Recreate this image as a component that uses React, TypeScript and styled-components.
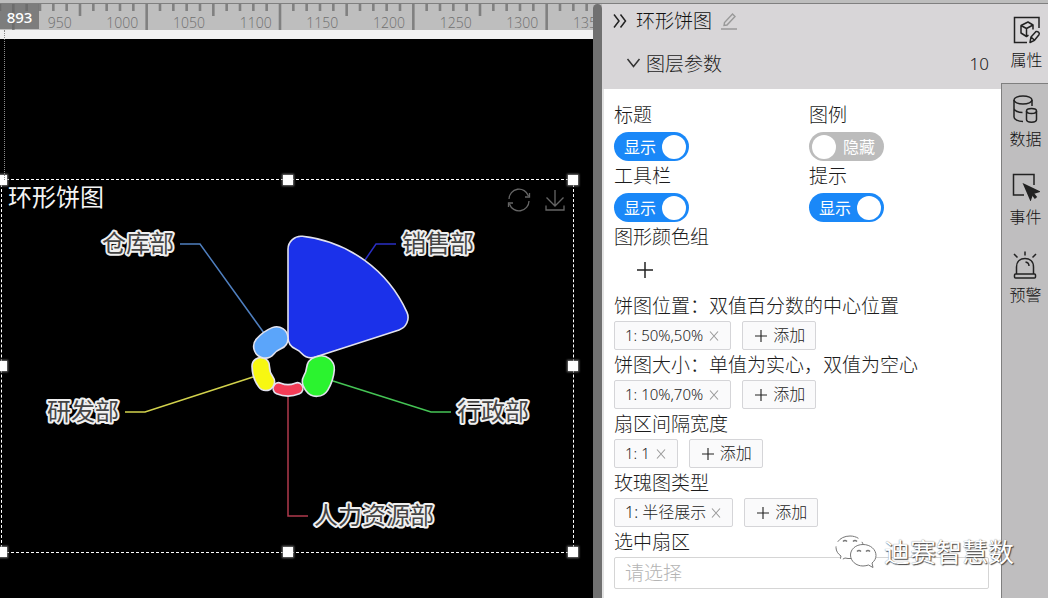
import React, { useLayoutEffect, useRef, useState } from "react";
import styled, { createGlobalStyle, css } from "styled-components";

const GlobalStyle = createGlobalStyle`
  *, *::before, *::after { box-sizing: border-box; }
  body {
    margin: 0;
    background: #bfbebf;
    color: #1c1c1c;
    font-family: "Noto Sans", "Noto Sans CJK SC", sans-serif;
    font-size: 19px;
    font-weight: 300;
    overflow: hidden;
  }
  button, select, input { font: inherit; color: inherit; }
`;

const Page = styled.div`
  display: flex;
  flex-direction: column;
  height: 100vh;
`;

const TopStrip = styled.div`
  flex: none;
  height: 4px;
  background: #bdbdbd;
  border-bottom: 1px solid #7f7f7f;
`;

const Workspace = styled.div`
  display: flex;
  flex: 1;
  min-height: 0;
`;

/* ---------- stage ---------- */

const Stage = styled.main`
  display: flex;
  flex-direction: column;
  flex: 1;
  min-width: 0;
  position: relative;
  background: #f1f1f1;
`;

const RulerBar = styled.div`
  flex: none;
  position: relative;
  height: 26px;
  margin-bottom: 9px;
  overflow: hidden;
  background: #bebebe;

  svg { display: block; }
  text {
    font-family: "Open Sans", sans-serif;
    font-size: 14px;
    font-weight: 300;
    fill: #6f6f6f;
    text-anchor: end;
  }
`;

const RulerBadge = styled.output`
  position: absolute;
  left: 0;
  top: 0;
  width: 39px;
  height: 25px;
  background: rgba(100, 100, 100, 0.72);
  color: #fff;
  font-size: 15px;
  font-weight: 500;
  line-height: 26px;
  text-align: center;
`;

const Canvas = styled.div`
  flex: 1;
  position: relative;
  overflow: hidden;
  background: #000;
`;

const GuideLine = styled.div`
  position: absolute;
  left: 4px;
  top: 26px;
  height: 150px;
  border-left: 1px dotted #8a8a8a;
  z-index: 1;
`;

const Selection = styled.section`
  position: absolute;
  left: 1px;
  top: 140px;
  width: 573px;
  height: 374px;
  border: 1px dashed #fff;
`;

const Handle = styled.span<{ $x: number; $y: number }>`
  position: absolute;
  left: ${(p) => p.$x}%;
  top: ${(p) => p.$y}%;
  width: 10px;
  height: 10px;
  margin: -5px 0 0 -5px;
  background: #fff;
  box-shadow: 0 0 2px 1px #777;
`;

const ChartHead = styled.header`
  position: absolute;
  left: 6px;
  right: 6px;
  top: 0;
  display: flex;
  justify-content: space-between;
  align-items: center;
  height: 34px;
`;

const ChartTitle = styled.h2`
  margin: 0;
  color: #f4f4f4;
  font-size: 24px;
  font-weight: 400;
  line-height: 32px;
`;

const ChartTools = styled.div`
  display: flex;
  gap: 12px;
  padding-top: 6px;
`;

const IconButton = styled.button`
  display: flex;
  align-items: center;
  justify-content: center;
  padding: 0;
  border: 0;
  background: none;
  cursor: pointer;
`;

const ChartSvg = styled.svg`
  display: block;

  text {
    font-size: 24px;
    font-weight: 400;
    fill: #444;
    stroke: #f0f0f0;
    stroke-width: 4px;
    stroke-linejoin: round;
    paint-order: stroke;
  }
`;

const Splitter = styled.div`
  flex: none;
  width: 9px;
  background: #707070;
  border-radius: 5px 5px 0 0;
`;

/* ---------- properties panel ---------- */

const Panel = styled.aside`
  flex: none;
  display: flex;
  flex-direction: column;
  width: 399px;
  background: #fff;
`;

const PanelHead = styled.header`
  flex: none;
  height: 85px;
  padding: 0 12px 0 11px;
  background: #d8d6d8;
`;

const HeadRow = styled.div`
  display: flex;
  align-items: center;
  height: 34px;
  gap: 9px;
`;

const HeadTitle = styled.h1`
  margin: 0;
  color: #111;
  font-size: 19px;
  font-weight: 300;
  line-height: 30px;
`;

const GroupRow = styled.button`
  display: flex;
  align-items: center;
  gap: 5px;
  width: 100%;
  height: 50px;
  padding: 0 0 0 13px;
  border: 0;
  background: none;
  cursor: pointer;

  output { margin-left: auto; font-size: 17px; }
`;

const PanelBody = styled.form`
  flex: 1;
  padding: 11px 12px 8px 10px;
  border-left: 2px solid #e2e2e2;
`;

const SwitchGrid = styled.div`
  display: grid;
  grid-template-columns: 52% 48%;
`;

const FieldLabel = styled.label`
  display: block;
  line-height: 30px;
  white-space: nowrap;
`;

const SwitchTrack = styled.label<{ $on: boolean }>`
  display: flex;
  align-items: center;
  justify-content: space-between;
  flex-direction: ${(p) => (p.$on ? "row" : "row-reverse")};
  width: 75px;
  height: 29px;
  margin-top: 2px;
  padding: ${(p) => (p.$on ? "0 3px 0 10px" : "0 9px 0 3px")};
  border-radius: 15px;
  background: ${(p) => (p.$on ? "#1a88f8" : "#bcbcbc")};
  color: #fff;
  font-size: 16px;
  font-weight: 400;
  line-height: 28px;
  cursor: pointer;
`;

const SwitchInput = styled.input`
  appearance: none;
  width: 24px;
  height: 24px;
  margin: 0;
  border-radius: 50%;
  background: #fff;
  cursor: pointer;
`;

const AddColor = styled(IconButton)`
  width: 62px;
  height: 36px;
  margin-bottom: 3px;
`;

const TagRow = styled.div`
  display: flex;
  gap: 11px;
  height: 29px;
`;

const chip = css`
  display: flex;
  align-items: center;
  height: 29px;
  border: 1px solid #d5d5d8;
  border-radius: 2px;
  background: #fafafb;
  line-height: 27px;
  white-space: nowrap;
`;

const Tag = styled.span<{ $numeric: boolean }>`
  ${chip}
  gap: ${(p) => (p.$numeric ? 6 : 5)}px;
  padding: 0 11px 0 10px;
  font-size: ${(p) => (p.$numeric ? 15 : 16)}px;
`;

const AddButton = styled.button`
  ${chip}
  gap: 6px;
  padding: 0 10px 0 12px;
  font-size: 16px;
  cursor: pointer;
`;

const SectorSelect = styled.select`
  display: block;
  appearance: none;
  width: 100%;
  height: 32px;
  padding: 0 10px;
  border: 1px solid #d5d5d5;
  border-radius: 2px;
  background: #fff;
  color: #b4b4b4;
  line-height: 30px;
`;

/* ---------- tab rail ---------- */

const Rail = styled.nav`
  flex: none;
  display: flex;
  flex-direction: column;
  width: 47px;
  background: #d8d6d8;
`;

const RailRest = styled.div`
  flex: 1;
  border: solid #7f7f7f;
  border-width: 1px 0 0 1px;
  background: #bfbebf;
`;

const RailTab = styled.button<{ $active?: boolean }>`
  display: flex;
  flex-direction: column;
  align-items: center;
  gap: 6px;
  width: 100%;
  height: ${(p) => (p.$active ? 79 : 78)}px;
  padding: ${(p) => (p.$active ? "12px 0 0 4px" : "11px 0 0 1px")};
  border: 0;
  background: none;
  color: #111;
  font-size: 16px;
  line-height: 20px;
  cursor: pointer;

  svg { flex: none; display: block; }
`;

const Watermark = styled.div`
  position: absolute;
  right: 34px;
  bottom: 27px;
  display: flex;
  align-items: center;
  gap: 7px;
  color: #fff;
  font-size: 26px;
  font-weight: 400;
  line-height: 38px;
  text-shadow: 1px 1px 1px #444, 0 0 1px #777;
  pointer-events: none;
`;

/* ---------- ruler ---------- */

const TICK = 40 / 3;

function Ruler() {
  const bar = useRef<HTMLDivElement>(null);
  const [width, setWidth] = useState(0);

  useLayoutEffect(() => {
    const el = bar.current;
    if (!el) return;
    const measure = () => setWidth(el.clientWidth);
    measure();
    const observer = new ResizeObserver(measure);
    observer.observe(el);
    return () => observer.disconnect();
  }, []);

  const tickCount = Math.ceil(width / TICK);
  const labelCount = Math.ceil((width + 28) / (5 * TICK));

  return (
    <RulerBar ref={bar}>
      <svg width="100%" height="26">
        <g stroke="#808080" strokeWidth="2.6">
          {Array.from({ length: tickCount }, (_, i) => (
            <line key={i} x1={i * TICK} x2={i * TICK} y1={0} y2={i % 10 === 1 ? 26 : i % 10 === 6 ? 12 : 7} />
          ))}
        </g>
        {Array.from({ length: labelCount }, (_, k) => (
          <text key={k} x={5 + k * 5 * TICK} y={24}>
            {900 + k * 50}
          </text>
        )).slice(1)}
      </svg>
      <RulerBadge>893</RulerBadge>
    </RulerBar>
  );
}

/* ---------- rose chart ---------- */

const INNER = 18.6;

const sectors = [
  { name: "销售部", radius: 130.5, fill: "#1b31ea", line: "#2a2fc4", points: "78,-106 89,-122 109,-122", x: 115, anchor: "start" },
  { name: "行政部", radius: 46.5, fill: "#2bf32f", line: "#45c455", points: "46,15 144,46 164,46", x: 170, anchor: "start" },
  { name: "人力资源部", radius: 30, fill: "#f43c57", line: "#b03a4c", points: "1,30 1,150 21,150", x: 27, anchor: "start" },
  { name: "研发部", radius: 36, fill: "#f7f712", line: "#d2d24c", points: "-34,11 -142,46 -162,46", x: -168, anchor: "end" },
  { name: "仓库部", radius: 41.5, fill: "#5ba5fa", line: "#4f7fbf", points: "-23,-33 -87,-122 -107,-122", x: -113, anchor: "end" },
] as const;

function polar(r: number, a: number) {
  return `${(r * Math.sin(a)).toFixed(2)} ${(-r * Math.cos(a)).toFixed(2)}`;
}

function sectorPath(R: number, a0: number, a1: number) {
  const c = Math.min(13, (R - INNER) / 2);
  const outA = Math.asin(c / (R - c));
  const inA = Math.asin(c / (INNER + c));
  const outE = Math.sqrt((R - c) ** 2 - c * c);
  const inE = Math.sqrt((INNER + c) ** 2 - c * c);
  return [
    `M${polar(inE, a0)}`,
    `L${polar(outE, a0)}`,
    `A${c} ${c} 0 0 1 ${polar(R, a0 + outA)}`,
    `A${R} ${R} 0 0 1 ${polar(R, a1 - outA)}`,
    `A${c} ${c} 0 0 1 ${polar(outE, a1)}`,
    `L${polar(inE, a1)}`,
    `A${c} ${c} 0 0 1 ${polar(INNER, a1 - inA)}`,
    `A${INNER} ${INNER} 0 0 0 ${polar(INNER, a0 + inA)}`,
    `A${c} ${c} 0 0 1 ${polar(inE, a0)}`,
    "Z",
  ].join(" ");
}

function RoseChart() {
  const step = (Math.PI * 2) / sectors.length;
  return (
    <ChartSvg width="571" height="372" viewBox="-285 -186 571 372" role="img" aria-label="环形饼图">
      {sectors.map((s) => (
        <polyline key={s.name} points={s.points} fill="none" stroke={s.line} strokeWidth="1.5" />
      ))}
      <g transform="translate(1 0)" stroke="#e2e2ee" strokeWidth="1.6">
        {sectors.map((s, i) => (
          <path key={s.name} fill={s.fill} d={sectorPath(s.radius, i * step, (i + 1) * step)} />
        ))}
      </g>
      {sectors.map((s) => {
        const end = s.points.split(",");
        return (
          <text key={s.name} x={s.x} y={Number(end[end.length - 1]) + 8} textAnchor={s.anchor}>
            {s.name}
          </text>
        );
      })}
    </ChartSvg>
  );
}

/* ---------- icons ---------- */

const Plus = ({ size }: { size: number }) => (
  <svg width={size} height={size} viewBox="0 0 14 14" stroke="#222" strokeWidth="1.3">
    <path d="M7 0V14M0 7H14" />
  </svg>
);

const Cross = () => (
  <svg width="10" height="10" viewBox="0 0 10 10" stroke="#999" strokeWidth="1.1">
    <path d="M1 0.5L9 9.5M9 0.5L1 9.5" />
  </svg>
);

const railIcon = {
  width: 28,
  height: 28,
  viewBox: "0 0 28 28",
  fill: "none",
  stroke: "#222",
  strokeWidth: 1.5,
} as const;

const PropsIcon = () => (
  <svg {...railIcon}>
    <path d="M26 12V1.5H1.5V26.500H14" />
    <path d="M8 9.500L15 6L20 9L13.500 12.500ZM8 9.500V17L13.500 20.500V12.500M20 9V13.500M13.500 20.500L15.500 19.200" strokeLinejoin="round" />
    <path d="M17 26.500L18 21L23 15.500C25 15 27 17 26 18.700L21.500 24.300ZM18 21L21.500 24.300" strokeLinejoin="round" />
  </svg>
);

const DataIcon = () => (
  <svg {...railIcon}>
    <ellipse cx="11" cy="5" rx="9" ry="4" />
    <path d="M2 5V22C2 24.500 6 26.500 11 26.500M20 5V11M2 13.500C2 15.500 6 17.500 10.500 17.500" />
    <ellipse cx="19.500" cy="16" rx="5" ry="2.500" />
    <path d="M14.500 16V24.500C14.500 28 24.500 28 24.500 24.500V16" />
  </svg>
);

const EventIcon = () => (
  <svg {...railIcon}>
    <path d="M12 22H1.500V1.500H22V12" />
    <path d="M12 11.500L27 18.500L20.500 20.500L18.500 26.500Z" fill="#222" />
    <path d="M20 20L24 25" strokeWidth="3" />
  </svg>
);

const AlarmIcon = () => (
  <svg {...railIcon}>
    <path d="M4.500 23V16C4.500 10 8.500 7.500 13 7.500S21.500 10 21.500 16V23" />
    <rect x="2.500" y="23" width="21" height="4" rx="1" />
    <path d="M13 4.500V0.500M5.500 6.500L2 3M20.500 6.500L24 3M13.500 11C16 11.500 17 13 17 15" />
  </svg>
);

/* ---------- form parts ---------- */

function SwitchField({ id, label, initial }: { id: string; label: string; initial: boolean }) {
  const [on, setOn] = useState(initial);
  return (
    <div>
      <FieldLabel htmlFor={id}>{label}</FieldLabel>
      <SwitchTrack $on={on} htmlFor={id}>
        <span>{on ? "显示" : "隐藏"}</span>
        <SwitchInput id={id} type="checkbox" role="switch" checked={on} onChange={() => setOn(!on)} />
      </SwitchTrack>
    </div>
  );
}

function TagField({ label, value, numeric = true }: { label: string; value: string; numeric?: boolean }) {
  return (
    <div role="group" aria-label={label}>
      <FieldLabel as="div">{label}</FieldLabel>
      <TagRow>
        <Tag $numeric={numeric}>
          {value}
          <IconButton type="button" aria-label="删除">
            <Cross />
          </IconButton>
        </Tag>
        <AddButton type="button">
          <Plus size={12} />
          添加
        </AddButton>
      </TagRow>
    </div>
  );
}

const handles = [0, 50, 100].flatMap((y) => [0, 50, 100].map((x) => ({ x, y }))).filter((h) => h.x !== 50 || h.y !== 50);

export default function App() {
  return (
    <>
      <GlobalStyle />
      <Page>
        <TopStrip />
        <Workspace>
          <Stage>
            <Ruler />
            <GuideLine />
            <Canvas>
              <Selection>
                <RoseChart />
                <ChartHead>
                  <ChartTitle>环形饼图</ChartTitle>
                  <ChartTools>
                    <IconButton type="button" aria-label="刷新">
                      <svg width="24" height="24" viewBox="0 0 24 24" fill="none" stroke="#666" strokeWidth="1.3">
                        <path d="M2 11A10 10 0 0 1 21.500 8M22 13A10 10 0 0 1 2.500 16" />
                        <path d="M22.500 5V9H18M1.500 19V15H6" />
                      </svg>
                    </IconButton>
                    <IconButton type="button" aria-label="下载">
                      <svg width="24" height="24" viewBox="0 0 24 24" fill="none" stroke="#666" strokeWidth="1.3">
                        <path d="M12 2V18M3.500 9.500L12 18L20.500 9.500M3 17.500V22H21V17.500" />
                      </svg>
                    </IconButton>
                  </ChartTools>
                </ChartHead>
                {handles.map((h) => (
                  <Handle key={`${h.x}-${h.y}`} $x={h.x} $y={h.y} />
                ))}
              </Selection>
            </Canvas>
          </Stage>
          <Splitter />
          <Panel>
            <PanelHead>
              <HeadRow>
                <IconButton type="button" aria-label="收起">
                  <svg width="14" height="14" viewBox="0 0 14 14" fill="none" stroke="#222" strokeWidth="1.5">
                    <path d="M1 0.500L6 7L1 13.500M7.500 0.500L12.500 7L7.500 13.500" />
                  </svg>
                </IconButton>
                <HeadTitle>环形饼图</HeadTitle>
                <IconButton type="button" aria-label="重命名">
                  <svg width="16" height="17" viewBox="0 0 16 17" fill="none" stroke="#999" strokeWidth="1.4">
                    <path d="M0 16H16M3 12.500L3.500 9.500L11.500 1L14 3.500L6 12Z" />
                  </svg>
                </IconButton>
              </HeadRow>
              <GroupRow type="button" aria-expanded="true">
                <svg width="15" height="10" viewBox="0 0 15 10" fill="none" stroke="#333" strokeWidth="1.5">
                  <path d="M1.500 1L7.500 8.500L13.500 1" />
                </svg>
                图层参数
                <output>10</output>
              </GroupRow>
            </PanelHead>
            <PanelBody>
              <SwitchGrid>
                <SwitchField id="title" label="标题" initial />
                <SwitchField id="legend" label="图例" initial={false} />
                <SwitchField id="toolbox" label="工具栏" initial />
                <SwitchField id="tooltip" label="提示" initial />
              </SwitchGrid>
              <FieldLabel htmlFor="add-color">图形颜色组</FieldLabel>
              <AddColor id="add-color" type="button">
                <Plus size={16} />
              </AddColor>
              <TagField label="饼图位置：双值百分数的中心位置" value="1: 50%,50%" />
              <TagField label="饼图大小：单值为实心，双值为空心" value="1: 10%,70%" />
              <TagField label="扇区间隔宽度" value="1: 1" />
              <TagField label="玫瑰图类型" value="1: 半径展示" numeric={false} />
              <FieldLabel htmlFor="sector">选中扇区</FieldLabel>
              <SectorSelect id="sector" defaultValue="">
                <option value="">请选择</option>
                {sectors.map((s) => (
                  <option key={s.name}>{s.name}</option>
                ))}
              </SectorSelect>
            </PanelBody>
          </Panel>
          <Rail>
            <RailTab type="button" $active>
              <PropsIcon />
              属性
            </RailTab>
            <RailRest>
              <RailTab type="button">
                <DataIcon />
                数据
              </RailTab>
              <RailTab type="button">
                <EventIcon />
                事件
              </RailTab>
              <RailTab type="button">
                <AlarmIcon />
                预警
              </RailTab>
            </RailRest>
          </Rail>
        </Workspace>
      </Page>
      <Watermark>
        <svg width="42" height="34" viewBox="0 0 42 34" fill="#fff" stroke="#777" strokeWidth="1">
          <path d="M15 1C7 1 1 6 1 12.500C1 16 3 19 6 21L5 25.500L10 23C12 23.500 14 23.700 16 23.500C27 23 29 16 28.500 11C27.500 5 22 1 15 1Z" strokeDasharray="14 5" />
          <path d="M28 9.500C20.500 9.500 15.500 14.500 15.500 20C15.500 26 21 31 28 31C30 31 32 30.500 33.500 30L38 32.500L37 28C39.500 26 41 23.500 41 20.500C41 14.500 35.500 9.500 28 9.500Z" />
          <path d="M8 6.500Q10 4.500 12 6.500M18 6.500Q20 4.500 22 6.500M22 16.500Q24 14.500 26 16.500M31 16.500Q33 14.500 35 16.500" fill="none" strokeWidth="1.500" />
        </svg>
        迪赛智慧数
      </Watermark>
    </>
  );
}
